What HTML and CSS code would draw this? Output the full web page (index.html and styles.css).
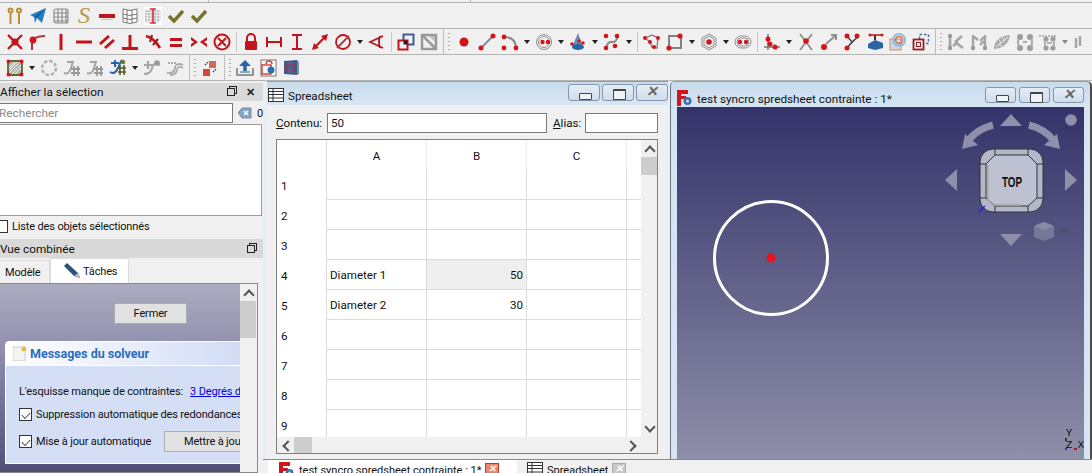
FILE: index.html

```html
<!DOCTYPE html>
<html lang="fr">
<head>
  <meta charset="UTF-8" />
  <title>FreeCAD - test syncro spredsheet contrainte</title>
  <link rel="stylesheet" href="styles.css">
</head>
<body>

<svg class="defs" width="0" height="0">
  <defs>
    <!-- workbench row -->
    <symbol id="pins" viewBox="0 0 18 18"><g fill="none" stroke="#b98f3a" stroke-width="2"><circle cx="4.500" cy="3.500" r="2"/><circle cx="13" cy="3.500" r="2"/><path d="M4.500 6v11M13 6v11"/></g></symbol>
    <symbol id="plane" viewBox="0 0 18 18"><path d="M1 8 17 1 13 16 8 11 6 16 5 10z" fill="#2a7cc0"/><path d="M5 10 17 1 8 11" fill="#155a96"/></symbol>
    <symbol id="mesh" viewBox="0 0 18 18"><g fill="none" stroke="#8c8c8c" stroke-width="1.200"><rect x="2" y="2" width="14" height="14" rx="2"/><path d="M6 2v14M10 2v14M14 2v14M2 6h14M2 10h14M2 14h14"/></g></symbol>
    <symbol id="dash" viewBox="0 0 18 18"><rect x="1" y="7" width="16" height="4" fill="#c3141c"/><rect x="3" y="12" width="12" height="1" fill="#e3b9b9"/></symbol>
    <symbol id="warp" viewBox="0 0 18 18"><g fill="#fff" stroke="#777"><path d="M2 2q7 3 14 0v13q-7 3-14 0z"/><path d="M6 3v13M11 3v13M2 7q7 3 14 0M2 11q7 3 14 0" fill="none"/></g></symbol>
    <symbol id="gridi" viewBox="0 0 18 18"><rect width="18" height="18" fill="#fff"/><g stroke="#aaa" stroke-width=".8"><path d="M2 3v13M5 3v13M8 3v13M11 3v13M14 3v13M1 4h16M1 7h16M1 10h16M1 13h16"/></g><path d="M9 2v14M6 2h6M6 16h6" stroke="#d3343a" stroke-width="1.600"/></symbol>
    <symbol id="check" viewBox="0 0 18 18"><path d="M2 9 7 14 16 4" fill="none" stroke="#75732b" stroke-width="3.400"/></symbol>
    <!-- constraints -->
    <symbol id="coin" viewBox="0 0 18 18"><path d="M2 2 16 16M16 2 2 16" stroke="#c3141c" stroke-width="2.400"/><circle cx="9" cy="9" r="3.600" fill="#c3141c"/></symbol>
    <symbol id="onobj" viewBox="0 0 18 18"><path d="M3 17V10Q4 3 16 3" fill="none" stroke="#a83a3a" stroke-width="2"/><circle cx="4" cy="7" r="3.400" fill="#d3141a"/></symbol>
    <symbol id="vert" viewBox="0 0 18 18"><rect x="7.500" y="1" width="3" height="16" fill="#c3141c"/></symbol>
    <symbol id="horiz" viewBox="0 0 18 18"><rect x="1" y="7.500" width="16" height="3" fill="#c3141c"/></symbol>
    <symbol id="para" viewBox="0 0 18 18"><path d="M2 11 11 3M7 15 16 7" stroke="#c3141c" stroke-width="3"/></symbol>
    <symbol id="perp" viewBox="0 0 18 18"><path d="M9 2V15M1 15.500H17" stroke="#c3141c" stroke-width="3"/></symbol>
    <symbol id="tang" viewBox="0 0 18 18"><path d="M2 3Q10 5 16 15" fill="none" stroke="#c3141c" stroke-width="2.600"/><path d="M8 2 6 9M14 6 9 12" stroke="#a01c20" stroke-width="2.200"/></symbol>
    <symbol id="equal" viewBox="0 0 18 18"><path d="M3 5h12v3H3zM3 11h12v3H3z" fill="#c3141c"/></symbol>
    <symbol id="symm" viewBox="0 0 18 18"><path d="M1 4 8 9 1 14V11L4 9 1 7zM17 4 10 9 17 14V11L14 9 17 7z" fill="#c3141c"/></symbol>
    <symbol id="block" viewBox="0 0 18 18"><g fill="none" stroke="#c3141c" stroke-width="2"><circle cx="9" cy="9" r="7.500"/><path d="M5 5 13 13M13 5 5 13"/></g></symbol>
    <symbol id="lock" viewBox="0 0 18 18"><path d="M5 8V5a4 4 0 0 1 8 0V8" fill="none" stroke="#c3141c" stroke-width="2"/><rect x="3" y="8" width="12" height="9" rx="1" fill="#c3141c"/></symbol>
    <symbol id="hdist" viewBox="0 0 18 18"><path d="M2 4V14M16 4V14M2 9H16" fill="none" stroke="#c3141c" stroke-width="2"/></symbol>
    <symbol id="vdist" viewBox="0 0 18 18"><path d="M4 2H14M4 16H14M9 2V16" fill="none" stroke="#c3141c" stroke-width="2"/></symbol>
    <symbol id="rad" viewBox="0 0 18 18"><path d="M4 14 14 4" stroke="#c3141c" stroke-width="2.200"/><path d="M17 1 10 3 15 8zM1 17 3 10 8 15z" fill="#c3141c"/></symbol>
    <symbol id="diam" viewBox="0 0 18 18"><g fill="none" stroke="#c3141c" stroke-width="1.800"><circle cx="9" cy="9" r="7"/><path d="M3 15 15 3" stroke="#a83a3a"/></g></symbol>
    <symbol id="angle" viewBox="0 0 18 18"><path d="M15 3 2 9 15 15M12 3Q10 9 12 15" fill="none" stroke="#b3141c" stroke-width="1.800"/></symbol>
    <symbol id="boxes" viewBox="0 0 18 18"><rect x="6.500" y="1.500" width="10" height="10" fill="none" stroke="#3b5f95" stroke-width="2"/><rect x="1.500" y="7.500" width="9" height="9" fill="#f0f0f0" stroke="#c3141c" stroke-width="2"/><rect x="6.500" y="7.500" width="4" height="4" fill="#222"/></symbol>
    <symbol id="grayb" viewBox="0 0 18 18"><rect x="2" y="2" width="14" height="14" fill="none" stroke="#9a9a9a" stroke-width="2.500"/><path d="M3 3 15 15" stroke="#9a9a9a" stroke-width="2.500"/><path d="M9 3H15V9z" fill="#bbb"/></symbol>
    <!-- geometry -->
    <symbol id="point" viewBox="0 0 18 18"><circle cx="9" cy="9" r="4.500" fill="#cf141a"/></symbol>
    <symbol id="line" viewBox="0 0 18 18"><path d="M3 15 15 3" stroke="#8a8a8a" stroke-width="2"/><circle cx="3" cy="15" r="2.500" fill="#d3141a"/><circle cx="15" cy="3" r="2.500" fill="#d3141a"/></symbol>
    <symbol id="arc" viewBox="0 0 18 18"><path d="M3 4Q14 4 15 14" fill="none" stroke="#8a8a8a" stroke-width="2"/><circle cx="3" cy="4" r="2.400" fill="#d3141a"/><circle cx="3" cy="15" r="2.400" fill="#d3141a"/><circle cx="15" cy="15" r="2.400" fill="#d3141a"/></symbol>
    <symbol id="circ" viewBox="0 0 18 18"><g fill="none" stroke="#8e8e8e"><circle cx="9" cy="9" r="7.500"/><circle cx="9" cy="9" r="5.500"/></g><circle cx="7.500" cy="9" r="2.200" fill="#d3141a"/><circle cx="13" cy="9" r="2.200" fill="#d3141a"/></symbol>
    <symbol id="cone" viewBox="0 0 18 18"><path d="M9 0 14 14H3z" fill="#6f8db3"/><ellipse cx="9" cy="14" rx="6" ry="3" fill="#2266aa"/><circle cx="3" cy="11" r="1.800" fill="#d3141a"/><circle cx="10" cy="8" r="1.800" fill="#d3141a"/><circle cx="14" cy="10" r="1.800" fill="#d3141a"/></symbol>
    <symbol id="spline" viewBox="0 0 18 18"><path d="M3 15Q5 8 9 9T15 3" fill="none" stroke="#8a8a8a" stroke-width="2"/><g fill="#d3141a"><circle cx="3" cy="3" r="2.300"/><circle cx="14" cy="3" r="2.300"/><circle cx="3" cy="15" r="2.300"/><circle cx="12" cy="13" r="2.300"/></g></symbol>
    <symbol id="poly" viewBox="0 0 18 18"><path d="M2 5 9 2 15 5 14 15 9 14 7 9z" fill="none" stroke="#8a8a8a" stroke-width="1.500"/><g fill="#d3141a"><circle cx="2" cy="5" r="2"/><circle cx="15" cy="5" r="2"/><circle cx="7" cy="9" r="2"/><circle cx="11" cy="14" r="2"/></g></symbol>
    <symbol id="rect" viewBox="0 0 18 18"><rect x="3" y="3" width="12" height="12" fill="none" stroke="#777" stroke-width="1.800"/><circle cx="14" cy="3" r="2.600" fill="#d3141a"/><circle cx="3" cy="15" r="2.600" fill="#d3141a"/></symbol>
    <symbol id="hexa" viewBox="0 0 18 18"><g fill="none" stroke="#8e8e8e"><path d="M9 1 16 5V13L9 17 2 13V5z"/><path d="M9 3 14 6V12L9 15 4 12V6z"/></g><circle cx="9" cy="9" r="2.800" fill="#d3141a"/></symbol>
    <symbol id="slot" viewBox="0 0 18 18"><g fill="none" stroke="#8e8e8e"><rect x="1" y="3" width="16" height="12" rx="6"/><rect x="3" y="5" width="12" height="8" rx="4"/></g><circle cx="6" cy="9" r="2.200" fill="#d3141a"/><circle cx="12" cy="9" r="2.200" fill="#d3141a"/></symbol>
    <symbol id="fillet" viewBox="0 0 18 18"><path d="M5 1V17M1 14H17" stroke="#777" stroke-width="1.500"/><circle cx="5" cy="6" r="2.500" fill="#d3141a"/><circle cx="7" cy="11" r="2.500" fill="#d3141a"/><circle cx="12" cy="14" r="2.500" fill="#d3141a"/></symbol>
    <symbol id="trim" viewBox="0 0 18 18"><path d="M3 1 15 17M15 1 3 17" stroke="#8e8e8e" stroke-width="1.800"/><circle cx="9" cy="8" r="2.800" fill="#d3141a"/></symbol>
    <symbol id="extend" viewBox="0 0 18 18"><path d="M6 11 15 3M11 2H16V7" fill="none" stroke="#8e8e8e" stroke-width="2"/><circle cx="4" cy="14" r="3" fill="#d3141a"/></symbol>
    <symbol id="split" viewBox="0 0 18 18"><path d="M4 15 9 9 15 4M9 9 4 3" stroke="#445" stroke-width="1.500"/><circle cx="4" cy="3" r="2.500" fill="#d3141a"/><circle cx="14" cy="3" r="2.500" fill="#d3141a"/><circle cx="4" cy="15" r="2.500" fill="#d3141a"/></symbol>
    <symbol id="ext" viewBox="0 0 18 18"><path d="M2 11 9 7 17 10V15L9 17 2 15z" fill="#2a64a8"/><path d="M9 2V7" stroke="#333" stroke-width="2"/><path d="M4 2H16" stroke="#b3141c" stroke-width="1.500"/><circle cx="4" cy="2" r="1.500" fill="#d3141a"/><circle cx="16" cy="2" r="1.500" fill="#d3141a"/></symbol>
    <symbol id="carbon" viewBox="0 0 18 18"><rect x="1" y="6" width="11" height="11" fill="#c9d9ea" stroke="#d88a60"/><circle cx="10" cy="7" r="6" fill="none" stroke="#8db8dc" stroke-width="2"/><circle cx="10" cy="7" r="3.500" fill="none" stroke="#d06a50" stroke-width="1.500"/></symbol>
    <symbol id="constr" viewBox="0 0 18 18"><rect x="7.500" y="1.500" width="9" height="9" fill="none" stroke="#3b6fb5" stroke-width="1.500" stroke-dasharray="2.500 2"/><rect x="1.500" y="6.500" width="10" height="10" fill="#f0f0f0" stroke="#9a1c24" stroke-width="1.800"/><rect x="4.500" y="9.500" width="4" height="4" fill="none" stroke="#9a1c24"/></symbol>
    <!-- grey tools -->
    <symbol id="g1" viewBox="0 0 18 18"><path d="M3 2V16M8 9 15 3M8 9 16 15M6 13 11 9" stroke="#a5a5a5" stroke-width="2.600" fill="none"/><circle cx="3" cy="3" r="2.200" fill="#999"/><circle cx="3" cy="15" r="2.200" fill="#999"/></symbol>
    <symbol id="g2" viewBox="0 0 18 18"><path d="M3 2V16M15 2V16M3 3 8 7M10 8 14 4M10 12 14 8" stroke="#a5a5a5" stroke-width="2.400" fill="none"/><circle cx="3" cy="15" r="2.200" fill="#999"/><circle cx="15" cy="15" r="2.200" fill="#999"/></symbol>
    <symbol id="g3" viewBox="0 0 18 18"><path d="M1 14Q3 3 17 2 15 15 1 16z" fill="#aaa"/><path d="M3 14 15 4M5 6 8 10M9 4 12 8M6 11 10 14" stroke="#eee" fill="none"/></symbol>
    <symbol id="g4" viewBox="0 0 18 18"><g fill="#9c9c9c"><circle cx="4" cy="4" r="3"/><circle cx="14" cy="4" r="3"/><circle cx="4" cy="15" r="3"/><circle cx="14" cy="15" r="3"/></g><path d="M3 5Q1 9 3 14M15 5Q17 9 15 14M7 9H11" fill="none" stroke="#aaa" stroke-width="2"/></symbol>
    <symbol id="g5" viewBox="0 0 18 18"><path d="M0 3H17" stroke="#a5a5a5" stroke-width="1.500" stroke-dasharray="2 1"/><g fill="#9c9c9c"><circle cx="7" cy="6" r="2.600"/><circle cx="14" cy="6" r="2.600"/><circle cx="7" cy="15" r="2.600"/><circle cx="14" cy="15" r="2.600"/></g><path d="M6 7V14M15 7V14M8 10H13" fill="none" stroke="#b0b0b0" stroke-width="2"/></symbol>
    <symbol id="g6" viewBox="0 0 18 18"><path d="M3 5V15M7 3V13" stroke="#a5a5a5" stroke-width="2.400"/></symbol>
    <!-- bottom row -->
    <symbol id="close" viewBox="0 0 18 18"><path d="M2 2H16V16H2z" fill="#b5b5b5" stroke="#5f6a2a" stroke-width="1.800"/><path d="M3 14 14 3M3 9 9 3M9 15 15 9M3 11 11 3M6 15 15 6" stroke="#eee"/><g fill="#d3141a"><circle cx="2.500" cy="2.500" r="2"/><circle cx="15.500" cy="2.500" r="2"/><circle cx="2.500" cy="15.500" r="2"/><circle cx="15.500" cy="15.500" r="2"/></g></symbol>
    <symbol id="dots" viewBox="0 0 18 18"><circle cx="9" cy="9" r="7" fill="none" stroke="#b0b0b0" stroke-width="2.400" stroke-dasharray="3.500 2"/></symbol>
    <symbol id="wire" viewBox="0 0 18 18"><path d="M1 14Q6 16 8 9T10 2M4 3H11" fill="none" stroke="#a5a5a5" stroke-width="2"/><path d="M8 10H17M8 14H17M11 7V17M15 7V17" stroke="#999" stroke-width="1.800"/></symbol>
    <symbol id="wireb" viewBox="0 0 18 18"><path d="M1 13Q6 16 9 9T13 1" fill="none" stroke="#2a64a8" stroke-width="2"/><path d="M2 4H10M6 1V8" stroke="#2a64a8" stroke-width="2"/><path d="M9 9H17M9 13H17M11 6V16M15 6V16" stroke="#555a20" stroke-width="1.600"/><circle cx="14" cy="3" r="2.200" fill="#75732b"/></symbol>
    <symbol id="wirep" viewBox="0 0 18 18"><path d="M1 15Q8 15 9 9T17 6" fill="none" stroke="#a5a5a5" stroke-width="2"/><path d="M1 6H10M5 2V10" stroke="#a5a5a5" stroke-width="2.200"/><circle cx="14" cy="4" r="2.800" fill="#999"/></symbol>
    <symbol id="wired" viewBox="0 0 18 18"><path d="M1 14Q8 15 9 9T17 6M4 16Q10 16 11 11T17 9" fill="none" stroke="#aaa" stroke-width="1.800"/><path d="M2 4 H11" stroke="#aaa" stroke-width="2" stroke-dasharray="2 1"/></symbol>
    <symbol id="redmove" viewBox="0 0 18 18"><rect x="8" y="2" width="7" height="7" fill="#d06a5a"/><rect x="2" y="10" width="7" height="7" fill="#d8453c"/><path d="M4 6 7 3M12 13 15 10" stroke="#444" stroke-width="1.500" stroke-dasharray="1.500 1"/></symbol>
    <symbol id="leave" viewBox="0 0 18 18"><path d="M1 9V16H17V9" fill="none" stroke="#777" stroke-width="1.500"/><path d="M9 12V5" stroke="#2a64a8" stroke-width="3.500"/><path d="M3 7 9 1 15 7z" fill="#2a64a8"/><rect x="4" y="12" width="10" height="2" fill="#8ab"/></symbol>
    <symbol id="sketchz" viewBox="0 0 18 18"><rect x="2" y="1" width="15" height="16" fill="#fff" stroke="#777"/><rect x="3" y="6" width="9" height="9" fill="none" stroke="#d3443a" stroke-width="1.500"/><path d="M7 5a3 3 0 0 1 6 0" fill="none" stroke="#d3443a" stroke-width="1.500"/><circle cx="12" cy="11" r="3.500" fill="#2a6fb0"/></symbol>
    <symbol id="view3" viewBox="0 0 18 18"><path d="M2 2 15 1V16L2 15z" fill="#3d5c86"/><path d="M15 1 17 3V15L15 16z" fill="#7a8ea8"/><rect x="5" y="5" width="7" height="7" fill="none" stroke="#b3343a"/><rect x="7" y="4" width="3" height="9" fill="none" stroke="#7a5a9a"/></symbol>
    <symbol id="table" viewBox="0 0 16 14"><rect x=".5" y=".5" width="15" height="13" fill="#fff" stroke="#333"/><path d="M.5 3.500H15.500M.5 6.500H15.500M.5 10H15.500M5 .5V13.500" stroke="#333" fill="none"/></symbol>
    <symbol id="fc" viewBox="0 0 16 16"><path d="M0 0H11V4H4V6H9V9H4V16H0z" fill="#d3141a"/><circle cx="10.500" cy="11" r="4" fill="#3f6fb0"/><circle cx="10.500" cy="11" r="1.500" fill="#cde"/></symbol>
  </defs>
</svg>

<div class="toolbars">
  <div class="strip"><i class="tick t1"></i><i class="tick t2"></i></div>

  <div class="tb-row">
    <span class="ic"><svg><use href="#pins"/></svg></span>
    <span class="ic"><svg><use href="#plane"/></svg></span>
    <span class="ic"><svg><use href="#mesh"/></svg></span>
    <span class="ic s-glyph">S</span>
    <span class="ic"><svg><use href="#dash"/></svg></span>
    <span class="ic"><svg><use href="#warp"/></svg></span>
    <span class="ic"><svg><use href="#gridi"/></svg></span>
    <span class="ic"><svg><use href="#check"/></svg></span>
    <span class="ic"><svg><use href="#check"/></svg></span>
  </div>

  <div class="tb-row">
    <span class="ic"><svg><use href="#coin"/></svg></span>
    <span class="ic"><svg><use href="#onobj"/></svg></span>
    <span class="ic"><svg><use href="#vert"/></svg></span>
    <span class="ic"><svg><use href="#horiz"/></svg></span>
    <span class="ic"><svg><use href="#para"/></svg></span>
    <span class="ic"><svg><use href="#perp"/></svg></span>
    <span class="ic"><svg><use href="#tang"/></svg></span>
    <span class="ic"><svg><use href="#equal"/></svg></span>
    <span class="ic"><svg><use href="#symm"/></svg></span>
    <span class="ic"><svg><use href="#block"/></svg></span>
    <span class="sep"></span>
    <span class="ic"><svg><use href="#lock"/></svg></span>
    <span class="ic"><svg><use href="#hdist"/></svg></span>
    <span class="ic"><svg><use href="#vdist"/></svg></span>
    <span class="ic"><svg><use href="#rad"/></svg></span>
    <span class="ic"><svg><use href="#diam"/></svg></span>
    <span class="arrow"></span>
    <span class="ic"><svg><use href="#angle"/></svg></span>
    <span class="sep"></span>
    <span class="ic"><svg><use href="#boxes"/></svg></span>
    <span class="ic"><svg><use href="#grayb"/></svg></span>
    <span class="tb-break"></span>
    <span class="ic"><svg><use href="#point"/></svg></span>
    <span class="ic"><svg><use href="#line"/></svg></span>
    <span class="ic"><svg><use href="#arc"/></svg></span>
    <span class="arrow"></span>
    <span class="ic"><svg><use href="#circ"/></svg></span>
    <span class="arrow"></span>
    <span class="ic"><svg><use href="#cone"/></svg></span>
    <span class="arrow"></span>
    <span class="ic"><svg><use href="#spline"/></svg></span>
    <span class="arrow"></span>
    <span class="sep"></span>
    <span class="ic"><svg><use href="#poly"/></svg></span>
    <span class="ic"><svg><use href="#rect"/></svg></span>
    <span class="arrow"></span>
    <span class="ic"><svg><use href="#hexa"/></svg></span>
    <span class="arrow"></span>
    <span class="ic"><svg><use href="#slot"/></svg></span>
    <span class="sep"></span>
    <span class="ic"><svg><use href="#fillet"/></svg></span>
    <span class="arrow"></span>
    <span class="ic"><svg><use href="#trim"/></svg></span>
    <span class="ic"><svg><use href="#extend"/></svg></span>
    <span class="ic"><svg><use href="#split"/></svg></span>
    <span class="ic"><svg><use href="#ext"/></svg></span>
    <span class="ic"><svg><use href="#carbon"/></svg></span>
    <span class="ic"><svg><use href="#constr"/></svg></span>
    <span class="tb-break"></span>
    <span class="ic"><svg><use href="#g1"/></svg></span>
    <span class="ic"><svg><use href="#g2"/></svg></span>
    <span class="ic"><svg><use href="#g3"/></svg></span>
    <span class="ic"><svg><use href="#g4"/></svg></span>
    <span class="ic"><svg><use href="#g5"/></svg></span>
    <span class="arrow grey"></span>
    <span class="ic"><svg><use href="#g6"/></svg></span>
  </div>

  <div class="tb-row">
    <span class="ic"><svg><use href="#close"/></svg></span>
    <span class="arrow"></span>
    <span class="ic"><svg><use href="#dots"/></svg></span>
    <span class="ic"><svg><use href="#wire"/></svg></span>
    <span class="ic"><svg><use href="#wire"/></svg></span>
    <span class="ic"><svg><use href="#wireb"/></svg></span>
    <span class="arrow"></span>
    <span class="ic"><svg><use href="#wirep"/></svg></span>
    <span class="ic"><svg><use href="#wired"/></svg></span>
    <span class="tb-break"></span>
    <span class="ic"><svg><use href="#redmove"/></svg></span>
    <span class="tb-break"></span>
    <span class="ic"><svg><use href="#leave"/></svg></span>
    <span class="ic"><svg><use href="#sketchz"/></svg></span>
    <span class="ic"><svg><use href="#view3"/></svg></span>
  </div>
</div>

<div class="main">
  <div class="left">
    <div class="dock-title">
      <span>Afficher la sélection</span>
      <span class="dock-btns"><i class="float-ic"></i><b>✕</b></span>
    </div>
    <div class="search-row">
      <div class="search">Rechercher</div>
      <svg class="clear" width="14" height="12" viewBox="0 0 14 12"><path d="M4 1H13V11H4L0 6z" fill="#7fa6cf" stroke="#8a8a8a"/><path d="M6 4 10 8M10 4 6 8" stroke="#fff" stroke-width="1.500"/></svg>
      <span>0</span>
    </div>
    <div class="sel-list"></div>
    <label class="sel-check"><i class="box"></i>Liste des objets sélectionnés</label>

    <div class="dock-title second">
      <span>Vue combinée</span>
      <span class="dock-btns"><i class="float-ic"></i></span>
    </div>
    <div class="tabs">
      <div class="tab">Modèle</div>
      <div class="tab active">
        <svg width="17" height="16" viewBox="0 0 17 16"><path d="M0 3 3 0 14 10 16 15 10 13z" fill="#2f4f7f"/><path d="M14 10 16 15 10 13z" fill="#bbb"/></svg>
        Tâches
      </div>
    </div>
    <div class="task-frame">
      <div class="task-view">
        <div class="close-btn">Fermer</div>
        <div class="solver">
          <div class="solver-head">
            <svg width="14" height="15" viewBox="0 0 14 15"><rect x="0" y="1" width="12" height="14" fill="#f4f4f0" stroke="#ccc"/><circle cx="11" cy="3" r="2.500" fill="#e0c050"/></svg>
            Messages du solveur
          </div>
          <div class="solver-body">
            <div class="solver-line">L'esquisse manque de contraintes: <a href="#">3 Degrés de liberté</a></div>
            <div class="solver-line"><i class="box on"></i>Suppression automatique des redondances</div>
            <div class="solver-line"><i class="box on"></i>Mise à jour automatique<span class="update-btn">Mettre à jour</span></div>
          </div>
        </div>
      </div>
      <div class="vbar">
        <span class="chev up"></span>
        <span class="thumb task-thumb"></span>
      </div>
    </div>
  </div>

  <div class="mdi">
    <div class="windows">
      <div class="win sheet-win">
        <div class="win-title">
          <svg width="16" height="14"><use href="#table"/></svg>
          <span class="win-name">Spreadsheet</span>
          <span class="win-btns"><i class="wb min"></i><i class="wb max"></i><i class="wb cls"></i></span>
        </div>
        <div class="sheet-body">
          <div class="formula">
            <label><u>C</u>ontenu:</label>
            <div class="field wide">50</div>
            <label><u>A</u>lias:</label>
            <div class="field alias"></div>
          </div>
          <div class="sheet-box">
            <div class="grid-clip">
              <table class="grid">
                <tr class="head"><th></th><th>A</th><th>B</th><th>C</th><th></th></tr>
                <tr><th>1</th><td></td><td></td><td></td><td></td></tr>
                <tr><th>2</th><td></td><td></td><td></td><td></td></tr>
                <tr><th>3</th><td></td><td></td><td></td><td></td></tr>
                <tr><th>4</th><td>Diameter 1</td><td class="num sel">50</td><td></td><td></td></tr>
                <tr><th>5</th><td>Diameter 2</td><td class="num">30</td><td></td><td></td></tr>
                <tr><th>6</th><td></td><td></td><td></td><td></td></tr>
                <tr><th>7</th><td></td><td></td><td></td><td></td></tr>
                <tr><th>8</th><td></td><td></td><td></td><td></td></tr>
                <tr><th>9</th><td></td><td></td><td></td><td></td></tr>
              </table>
            </div>
            <div class="vbar">
              <span class="chev up"></span>
              <span class="thumb"></span>
              <span class="fill"></span>
              <span class="chev down"></span>
            </div>
            <div class="hbar">
              <span class="chev left"></span>
              <span class="thumb"></span>
              <span class="fill"></span>
              <span class="chev right"></span>
            </div>
            <div class="corner"></div>
          </div>
        </div>
      </div>

      <div class="win view-win">
        <div class="win-title">
          <svg width="16" height="16"><use href="#fc"/></svg>
          <span class="win-name">test syncro spredsheet contrainte : 1*</span>
          <span class="win-btns"><i class="wb min"></i><i class="wb max"></i><i class="wb cls"></i></span>
        </div>
        <svg class="view3d" width="407" height="352" viewBox="677 107 407 352">
          <path d="M677 403.500H1084" stroke="#c4646c" stroke-width="1"/>
          <circle cx="771" cy="258" r="56.500" fill="none" stroke="#fff" stroke-width="3"/>
          <circle cx="771" cy="258" r="4.500" fill="#e8141a"/>

          <g fill="#8f8fac">
            <path d="M1000 126 1011 114 1022 126z"/>
            <path d="M1000 234 1011 246 1022 234z"/>
            <path d="M957 169 945 180 957 191z"/>
            <path d="M1065 169 1077 180 1065 191z"/>
            <circle cx="1071" cy="120" r="5.800"/>
            <path d="M962 149 965 134 978 145z"/>
            <path d="M1060 149 1057 134 1044 145z"/>
          </g>
          <g fill="none" stroke="#8f8fac" stroke-width="7">
            <path d="M993 125Q977 129 968 141"/>
            <path d="M1029 125Q1045 129 1054 141"/>
          </g>
          <path d="M1044 222 1054 226V237L1044 241 1034 237V226z" fill="#77779a"/>
          <path d="M1034 226 1044 222 1054 226 1044 230z" fill="#8a8aa8"/>
          <path d="M1058 228H1070L1064 234z" fill="#4f4f74"/>

          <rect x="980" y="149" width="63" height="63" rx="13" fill="#b4b7c9" stroke="#333"/>
          <path d="M995 155H1028L1037 164V198L1028 206H995L986 198V164z" fill="#bec1d1" stroke="#333"/>
          <path d="M995 149V155M1028 149V155M995 212V206M1028 212V206M980 164H986M980 198H986M1043 164H1037M1043 198H1037" stroke="#333" fill="none"/>
          <path d="M988 165V200L993 205H1022" fill="none" stroke="#a9a79f" stroke-width="1.500"/>
          <text x="1012" y="187" class="cube-text" textLength="20" lengthAdjust="spacingAndGlyphs">TOP</text>
          <path d="M979 212 985 206" stroke="#1a1ae0" stroke-width="1.200"/>

          <text x="1069" y="436" class="axis">Y</text>
          <text x="1069" y="448" class="axis">Z</text>
          <text x="1081" y="448" class="axis">X</text>
          <rect x="1065" y="438" width="2" height="3" fill="#333"/>
          <rect x="1065" y="448" width="2" height="2" fill="#1a3ab0"/>
          <rect x="1074" y="448" width="3" height="2" fill="#a82020"/>
        </svg>
      </div>
    </div>

    <div class="doc-tabs">
      <div class="doc-tab active">
        <svg width="16" height="16"><use href="#fc"/></svg>
        <span>test syncro spredsheet contrainte : 1*</span>
        <i class="tab-x red"></i>
      </div>
      <div class="doc-tab">
        <svg width="16" height="14"><use href="#table"/></svg>
        <span>Spreadsheet</span>
        <i class="tab-x"></i>
      </div>
    </div>
  </div>
</div>

</body>
</html>
```

FILE: styles.css

```css
* {
  box-sizing: border-box;
}
body {
  margin: 0;
  width: 1092px;
  height: 473px;
  overflow: hidden;
  background-color: #f0f0f0;
  font-family: Roboto, "Noto Sans", sans-serif;
  font-size: 11.600px;
  color: #111;
}
.defs {
  position: absolute;
}

/* toolbars */
.toolbars {
  height: 81px;
  background-color: #f0f0f0;
}
.strip {
  display: flex;
  height: 3px;
  border-bottom: 1px solid #b4b4b4;
}
.tick {
  width: 1px;
  background-color: #b4b4b4;
}
.t1 {
  margin-left: 208px;
}
.t2 {
  margin-left: 261px;
}
.tb-row {
  display: flex;
  align-items: center;
  height: 26px;
  padding-left: 3.500px;
  border-bottom: 1px solid #b4b4b4;
  overflow: hidden;
}
.ic {
  flex: 0 0 23px;
  height: 23px;
  display: flex;
  align-items: center;
  justify-content: center;
}
.ic svg {
  width: 18px;
  height: 18px;
}
.s-glyph {
  font-family: "Liberation Serif", serif;
  font-style: italic;
  font-size: 24px;
  line-height: 23px;
  color: #b9964a;
}
.arrow {
  flex: 0 0 11px;
  height: 23px;
  position: relative;
}
.arrow::after {
  content: "";
  position: absolute;
  left: 2px;
  top: 10px;
  border-left: 3.500px solid transparent;
  border-right: 3.500px solid transparent;
  border-top: 4px solid #222;
}
.arrow.grey::after {
  border-top-color: #888;
}
.sep {
  flex: 0 0 6px;
  height: 20px;
  background: linear-gradient(#c8c8c8, #c8c8c8) center / 1px 100% no-repeat;
}
.tb-break {
  flex: 0 0 12px;
  height: 26px;
  background:
    linear-gradient(#bdbdbd, #bdbdbd) 2px 0 / 1px 100% no-repeat,
    repeating-linear-gradient(#aaa 0 1px, transparent 1px 4px) 7px 4px / 2px 18px no-repeat;
}

/* left docks */
.main {
  display: flex;
  height: 392px;
}
.left {
  width: 263px;
  padding-top: 2px;
  overflow: hidden;
  font-size: 11px;
  letter-spacing: -0.15px;
  background-color: #f0f0f0;
}
.dock-title {
  display: flex;
  justify-content: space-between;
  align-items: center;
  height: 18px;
  padding-right: 8px;
  background-color: #d9d9d9;
  font-size: 11.800px;
  letter-spacing: 0;
}
.dock-title.second {
  margin-top: 3px;
  height: 19px;
}
.dock-btns {
  display: flex;
  align-items: center;
  gap: 11px;
}
.dock-btns b {
  font-size: 11px;
  color: #222;
}
.float-ic {
  display: block;
  width: 8px;
  height: 8px;
  border: 1px solid #222;
  box-shadow: 2px -2px 0 -1px #d9d9d9, 2px -2px 0 0 #222;
}
.search-row {
  display: flex;
  align-items: center;
  height: 20px;
  margin-top: 2px;
  gap: 5px;
}
.search {
  width: 238px;
  height: 20px;
  margin-left: -5px;
  padding: 2px 3px;
  border: 1px solid #7a7a7a;
  background-color: #fff;
  color: #8a8a8a;
  font-size: 11.800px;
  letter-spacing: 0;
}
.sel-list {
  height: 92px;
  margin: 1px 1px 0 -3px;
  border: 1px solid #9a9a9a;
  background-color: #fff;
}
.sel-check {
  display: flex;
  align-items: center;
  gap: 4px;
  height: 20px;
  margin-left: -5px;
}
.box {
  display: block;
  flex: none;
  width: 13px;
  height: 13px;
  border: 1px solid #333;
  background-color: #fff;
  position: relative;
}
.box.on::after {
  content: "";
  position: absolute;
  left: 2px;
  top: 1px;
  width: 7px;
  height: 4px;
  margin-top: 2px;
  border-left: 1px solid #555;
  border-bottom: 1px solid #555;
  transform: rotate(-45deg);
}
.tabs {
  display: flex;
  align-items: flex-end;
  height: 25px;
}
.tab {
  display: flex;
  align-items: center;
  height: 23px;
  width: 50px;
  padding-left: 5px;
  background-color: #f0f0f0;
  border-top: 1px solid #ddd;
  border-right: 1px solid #ddd;
}
.tab.active {
  width: 79px;
  height: 25px;
  gap: 2px;
  padding-left: 13px;
  background-color: #fff;
  border: 1px solid #ddd;
  border-bottom: none;
}
.task-frame {
  display: flex;
  width: 258px;
  height: 190px;
  border: 1px solid #8a8a8a;
  border-left: none;
}
.task-view {
  width: 240px;
  overflow: hidden;
  padding-top: 19px;
  background: linear-gradient(#acacc0, #8f8fae 35%, #4e4e78);
}
.close-btn {
  width: 73px;
  height: 21px;
  margin-left: 114px;
  line-height: 19px;
  text-align: center;
  border: 1px solid #adadad;
  background-color: #e1e1e1;
}
.solver {
  width: 300px;
  height: 123px;
  margin: 17px 0 0 5px;
  border: 1px solid #fff;
  border-radius: 4px 0 0 0;
  background-color: #d4dff6;
}
.solver-head {
  display: flex;
  align-items: center;
  gap: 3px;
  height: 24px;
  padding-left: 7px;
  border-bottom: 1px solid #fff;
  background: linear-gradient(90deg, #fff, #d2ddf5 78%);
  color: #2a6cc0;
  font-weight: bold;
  font-size: 12.500px;
  letter-spacing: 0;
}
.solver-body {
  padding: 15px 0 0 13px;
}
.solver-line {
  display: flex;
  align-items: center;
  gap: 4px;
  height: 27px;
  white-space: nowrap;
}
.solver-line:first-child {
  height: 20px;
}
.solver-line a {
  color: #0000e0;
  margin-left: 3px;
}
.update-btn {
  width: 100px;
  height: 21px;
  margin-left: 9px;
  line-height: 19px;
  text-align: center;
  border: 1px solid #adadad;
  background-color: #e1e1e1;
}
.vbar {
  flex: 0 0 16px;
  display: flex;
  flex-direction: column;
  background-color: #f0f0f0;
}
.hbar {
  display: flex;
  background-color: #f0f0f0;
}
.chev {
  flex: 0 0 17px;
  position: relative;
}
.chev::after {
  content: "";
  position: absolute;
  left: 5px;
  top: 7px;
  width: 6px;
  height: 6px;
  border-left: 2px solid #555;
  border-top: 2px solid #555;
}
.chev.up::after {
  transform: rotate(45deg);
}
.chev.down::after {
  top: 3px;
  transform: rotate(225deg);
}
.chev.left::after {
  top: 5px;
  left: 7px;
  transform: rotate(-45deg);
}
.chev.right::after {
  top: 5px;
  left: 3px;
  transform: rotate(135deg);
}
.thumb {
  flex: 0 0 18px;
  background-color: #cdcdcd;
}
.task-thumb {
  flex-basis: 37px;
}
.fill {
  flex: 1;
}

/* mdi windows */
.mdi {
  flex: 1;
  display: flex;
  flex-direction: column;
  min-width: 0;
  background-color: #e9edf5;
}
.windows {
  display: flex;
  height: 378px;
  padding-left: 4px;
}
.win {
  display: flex;
  flex-direction: column;
  border-top: 1px solid #9a9a9a;
  background: linear-gradient(#c8dbec, #dae7f4 24px);
}
.win-title {
  display: flex;
  align-items: flex-start;
  gap: 4px;
  height: 25px;
  padding-left: 1px;
}
.win-title svg {
  margin-top: 6px;
}
.win-name {
  flex: 1;
  margin-top: 7px;
  white-space: nowrap;
}
.win-btns {
  display: flex;
  gap: 2px;
  margin-top: 2px;
}
.wb {
  display: block;
  width: 32px;
  height: 17px;
  border: 1px solid #8495ac;
  border-radius: 3px;
  background: linear-gradient(#e4edf6, #cfdcea);
  position: relative;
}
.wb.min::after,
.wb.max::after {
  content: "";
  position: absolute;
  left: 10px;
  width: 11px;
  border: 1px solid #444;
  border-radius: 1px;
  background-color: #eef3f8;
}
.wb.min::after {
  top: 8px;
  height: 5px;
}
.wb.max::after {
  top: 4px;
  height: 8px;
  border-top-width: 2px;
}
.wb.cls::before {
  content: "✕";
  position: absolute;
  left: 0;
  right: 0;
  top: -2px;
  text-align: center;
  font-size: 14px;
  font-weight: bold;
  color: #666;
}
.sheet-win {
  width: 401px;
}
.sheet-body {
  flex: 1;
  padding: 8px 10px 5px 9px;
  background-color: #f0f0f0;
}
.formula {
  display: flex;
  align-items: center;
  height: 20px;
}
.formula label {
  width: 51px;
}
.formula label + .field + label {
  width: 32px;
  margin-left: 6px;
}
.field {
  height: 20px;
  padding: 2px 3px;
  border: 1px solid #7a7a7a;
  background-color: #fff;
}
.wide {
  width: 220px;
}
.alias {
  width: 73px;
}
.sheet-box {
  display: grid;
  grid-template-columns: 364px 16px;
  grid-template-rows: 297px 16px;
  width: 382px;
  height: 315px;
  margin-top: 6px;
  border: 1px solid #808080;
}
.grid-clip {
  overflow: hidden;
  background-color: #fff;
}
.grid {
  width: 450px;
  table-layout: fixed;
  border-collapse: separate;
  border-spacing: 0;
  color: #111;
}
.grid th,
.grid td {
  height: 30px;
  padding: 1px 3px 0;
  font-weight: normal;
  border-right: 1px solid #dcdcdc;
  border-bottom: 1px solid #dcdcdc;
  white-space: nowrap;
}
.grid th:first-child {
  width: 50px;
  padding-left: 4px;
  text-align: left;
  border-bottom: none;
}
.grid .head th {
  text-align: center;
  border-bottom: none;
  border-right-color: #eee;
}
.grid .head th:first-child {
  border-right-color: #dcdcdc;
}
.num {
  text-align: right;
}
.sel {
  background-color: #efefef;
}
.corner {
  background-color: #f0f0f0;
}

.view-win {
  flex: 1;
  margin-left: 2px;
  border-left: 1px solid #6a7686;
  border-right: 2px solid #4a4a4a;
  border-radius: 5px 5px 0 0;
  padding: 0 6px;
  font-size: 11.750px;
  background: linear-gradient(#c8dbec, #d6e5f3 24px);
}
.view-win .win-title {
  gap: 4px;
  padding-left: 0;
}
.view-win .win-title svg {
  margin-top: 8px;
}
.view-win .win-name {
  margin-top: 10px;
}
.view-win .win-btns {
  gap: 3px;
  margin-top: 5px;
}
.view-win .wb {
  width: 31px;
  height: 16px;
}
.view-win .wb.min::after {
  top: 7px;
}
.view3d {
  display: block;
  flex: none;
  background: linear-gradient(#33336a, #8f8fa9);
}
.cube-text {
  font-family: "Liberation Sans", Arial, sans-serif;
  font-size: 15px;
  font-weight: bold;
  text-anchor: middle;
  fill: #111;
}
.axis {
  font-family: "Liberation Mono", monospace;
  font-size: 11px;
  text-anchor: middle;
  fill: #111;
}

/* document tabs */
.doc-tabs {
  display: flex;
  height: 14px;
  padding-left: 5px;
  overflow: hidden;
  border-top: 1px solid #8a8a8a;
  background-color: #f0f0f0;
  font-size: 11px;
}
.doc-tab {
  display: flex;
  align-items: flex-start;
  gap: 4px;
  width: 112px;
  height: 22px;
  padding: 4px 0 0 8px;
  white-space: nowrap;
}
.doc-tab svg {
  margin-top: -2px;
}
.doc-tab.active {
  width: 249px;
  margin-right: 2px;
  padding-left: 11px;
  background-color: #fff;
}
.tab-x {
  display: block;
  flex: none;
  position: relative;
  width: 14px;
  height: 14px;
  margin-top: -1px;
  border: 1px solid #aaa;
  background-color: #c8c8c8;
}
.tab-x::after {
  content: "✕";
  position: absolute;
  left: 0;
  right: 0;
  top: -1px;
  text-align: center;
  font-size: 10px;
  font-weight: bold;
  color: #fff;
}
.tab-x.red {
  border-color: #c0392b;
  background-color: #e8856c;
}
```
